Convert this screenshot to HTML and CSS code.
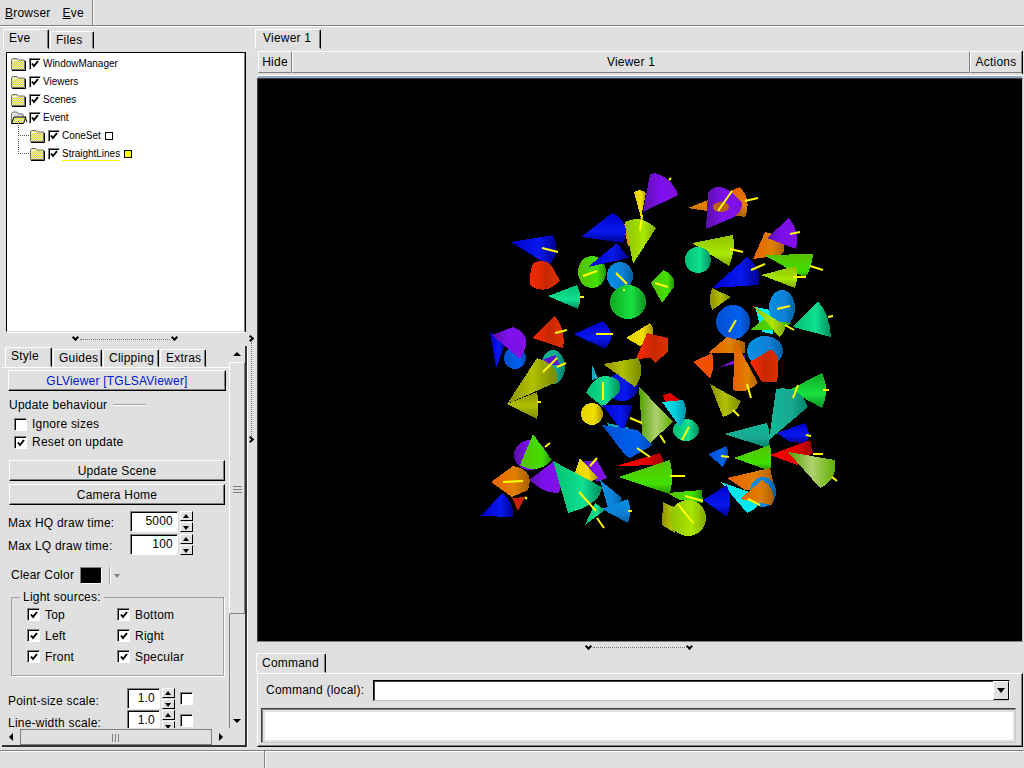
FILE: index.html
```html
<!DOCTYPE html>
<html lang="en">
<head>
<meta charset="utf-8">
<title>Eve</title>
<link rel="stylesheet" href="styles.css">
</head>
<body>
<svg class="defs" width="0" height="0" aria-hidden="true">
  <defs>
    <pattern id="dith" width="2" height="2" patternUnits="userSpaceOnUse"><rect width="2" height="2" fill="#ffff50"/><rect width="1" height="1" fill="#c8c8a8"/><rect x="1" y="1" width="1" height="1" fill="#c8c8a8"/></pattern>
    <symbol id="folder" viewBox="0 0 16 14">
      <path d="M1.5 12.5V2.5L3 1.500H7L8.500 3H14.500V12.500Z" fill="url(#dith)" stroke="#707070"/>
      <path d="M2 13.500H15.500V4" fill="none" stroke="#000"/>
      <path d="M2 3.500H7" stroke="#fff"/>
    </symbol>
    <symbol id="folderopen" viewBox="0 0 18 14">
      <path d="M1.500 12.500V2.500L3 1H7L8.500 3H13V6" fill="#e0e0e0" stroke="#707070"/>
      <path d="M1.500 12.500L4 6H16L13.500 12.500Z" fill="url(#dith)" stroke="#000"/>
      <path d="M15 6L17 11" stroke="#000"/>
    </symbol>
    <symbol id="tick" viewBox="0 0 10 10">
      <path d="M2 4.500L4 7L8 2" fill="none" stroke="#000" stroke-width="2"/>
    </symbol>
    <linearGradient id="b"><stop offset="0" stop-color="#0000c8"/><stop offset=".6" stop-color="#0818f0"/><stop offset="1" stop-color="#000090"/></linearGradient>
    <linearGradient id="b2"><stop offset="0" stop-color="#0050d0"/><stop offset=".7" stop-color="#0060f0"/><stop offset="1" stop-color="#0048a8"/></linearGradient>
    <linearGradient id="p"><stop offset="0" stop-color="#5a10a8"/><stop offset=".5" stop-color="#7e10f0"/><stop offset="1" stop-color="#8010e0"/></linearGradient>
    <linearGradient id="r"><stop offset="0" stop-color="#ff2800"/><stop offset=".55" stop-color="#c82800"/><stop offset="1" stop-color="#e03000"/></linearGradient>
    <linearGradient id="rr"><stop offset="0" stop-color="#ff0000"/><stop offset=".6" stop-color="#e80000"/><stop offset="1" stop-color="#a00000"/></linearGradient>
    <linearGradient id="o"><stop offset="0" stop-color="#e86000"/><stop offset=".6" stop-color="#e08000"/><stop offset="1" stop-color="#a86000"/></linearGradient>
    <linearGradient id="y"><stop offset="0" stop-color="#e8d000"/><stop offset=".6" stop-color="#f0e000"/><stop offset="1" stop-color="#a89000"/></linearGradient>
    <linearGradient id="l"><stop offset="0" stop-color="#90c000"/><stop offset=".6" stop-color="#a8e800"/><stop offset="1" stop-color="#80a800"/></linearGradient>
    <linearGradient id="ol"><stop offset="0" stop-color="#909000"/><stop offset=".5" stop-color="#b0c000"/><stop offset="1" stop-color="#788800"/></linearGradient>
    <linearGradient id="g"><stop offset="0" stop-color="#58c000"/><stop offset=".7" stop-color="#40e000"/><stop offset="1" stop-color="#289000"/></linearGradient>
    <linearGradient id="g2"><stop offset="0" stop-color="#10a820"/><stop offset=".6" stop-color="#18e040"/><stop offset="1" stop-color="#109020"/></linearGradient>
    <linearGradient id="tg"><stop offset="0" stop-color="#00c070"/><stop offset=".6" stop-color="#10e090"/><stop offset="1" stop-color="#008860"/></linearGradient>
    <linearGradient id="t"><stop offset="0" stop-color="#10b898"/><stop offset=".6" stop-color="#18a890"/><stop offset="1" stop-color="#008068"/></linearGradient>
    <linearGradient id="c"><stop offset="0" stop-color="#00f0f0"/><stop offset=".6" stop-color="#00c8d8"/><stop offset="1" stop-color="#0090a8"/></linearGradient>
    <linearGradient id="s"><stop offset="0" stop-color="#0090e0"/><stop offset=".6" stop-color="#1080d8"/><stop offset="1" stop-color="#0060a0"/></linearGradient>
    <linearGradient id="w"><stop offset="0" stop-color="#50a000"/><stop offset=".5" stop-color="#b0d070"/><stop offset="1" stop-color="#60b000"/></linearGradient>
    <linearGradient id="bv" href="#b" gradientTransform="rotate(90 .5 .5)"/>
    <linearGradient id="pv" href="#p" gradientTransform="rotate(90 .5 .5)"/>
    <linearGradient id="rv" href="#r" gradientTransform="rotate(90 .5 .5)"/>
    <linearGradient id="ov" href="#o" gradientTransform="rotate(90 .5 .5)"/>
    <linearGradient id="lv" href="#l" gradientTransform="rotate(90 .5 .5)"/>
    <linearGradient id="olv" href="#ol" gradientTransform="rotate(90 .5 .5)"/>
    <linearGradient id="gv" href="#g" gradientTransform="rotate(90 .5 .5)"/>
    <linearGradient id="g2v" href="#g2" gradientTransform="rotate(90 .5 .5)"/>
    <linearGradient id="tgv" href="#tg" gradientTransform="rotate(90 .5 .5)"/>
    <linearGradient id="tv" href="#t" gradientTransform="rotate(90 .5 .5)"/>
    <linearGradient id="sv" href="#s" gradientTransform="rotate(90 .5 .5)"/>
    <linearGradient id="wv" href="#w" gradientTransform="rotate(90 .5 .5)"/>
  </defs>
</svg>
<div class="app">
  <div class="menubar">
    <div class="menus"><span class="menu"><u>B</u>rowser</span><span class="menu"><u>E</u>ve</span></div>
  </div>
  <div class="main">
    <div class="left">
      <div class="tabs t-top">
        <span class="tab on w-eve">Eve</span><span class="tab w-files">Files</span>
      </div>
      <div class="treebox">
        <div class="tree-row"><svg class="fold"><use href="#folder"/></svg><span class="ck"><svg><use href="#tick"/></svg></span><span class="tree-label">WindowManager</span></div>
        <div class="tree-row"><svg class="fold"><use href="#folder"/></svg><span class="ck"><svg><use href="#tick"/></svg></span><span class="tree-label">Viewers</span></div>
        <div class="tree-row"><svg class="fold"><use href="#folder"/></svg><span class="ck"><svg><use href="#tick"/></svg></span><span class="tree-label">Scenes</span></div>
        <div class="tree-row"><svg class="fold"><use href="#folderopen"/></svg><span class="ck"><svg><use href="#tick"/></svg></span><span class="tree-label">Event</span></div>
        <div class="tree-row sub"><svg class="fold"><use href="#folder"/></svg><span class="ck"><svg><use href="#tick"/></svg></span><span class="tree-label">ConeSet</span><span class="swatch"></span></div>
        <div class="tree-row sub"><svg class="fold"><use href="#folder"/></svg><span class="ck"><svg><use href="#tick"/></svg></span><span class="tree-label sel">StraightLines</span><span class="swatch yel"></span></div>
      </div>
      <div class="hsplit hs-left"><span class="chev"></span><span class="dots"></span><span class="chev"></span></div>
      <div class="editor">
        <div class="tabs t-low">
          <span class="tab on w-style">Style</span><span class="tab w-guides">Guides</span><span class="tab w-clip">Clipping</span><span class="tab w-extras">Extras</span>
        </div>
        <div class="pane">
          <button class="btn b-gl">GLViewer [TGLSAViewer]</button>
          <div class="sect"><span>Update behaviour</span><i class="rule"></i></div>
          <label class="chk c1"><span class="cb"></span>Ignore sizes</label>
          <label class="chk c2"><span class="cb"><svg><use href="#tick"/></svg></span>Reset on update</label>
          <button class="btn b-us">Update Scene</button>
          <button class="btn b-ch">Camera Home</button>
          <div class="num n-hq"><span class="nl">Max HQ draw time:</span><span class="inp w48">5000</span><span class="spin"><b class="up"></b><b class="dn"></b></span></div>
          <div class="num n-lq"><span class="nl">Max LQ draw time:</span><span class="inp w48">100</span><span class="spin"><b class="up"></b><b class="dn"></b></span></div>
          <div class="clear"><span>Clear Color</span><span class="blk"></span><i class="vsep"></i><i class="caret"></i></div>
          <fieldset class="lights">
            <legend>Light sources:</legend>
            <div class="lgrid">
              <label class="lc"><span class="cb"><svg><use href="#tick"/></svg></span>Top</label>
              <label class="lc"><span class="cb"><svg><use href="#tick"/></svg></span>Bottom</label>
              <label class="lc"><span class="cb"><svg><use href="#tick"/></svg></span>Left</label>
              <label class="lc"><span class="cb"><svg><use href="#tick"/></svg></span>Right</label>
              <label class="lc"><span class="cb"><svg><use href="#tick"/></svg></span>Front</label>
              <label class="lc"><span class="cb"><svg><use href="#tick"/></svg></span>Specular</label>
            </div>
          </fieldset>
          <div class="num n-ps"><span class="nl nl2">Point-size scale:</span><span class="inp w33">1.0</span><span class="spin"><b class="up"></b><b class="dn"></b></span><span class="cb cb-s"></span></div>
          <div class="num n-lw"><span class="nl nl2">Line-width scale:</span><span class="inp w33">1.0</span><span class="spin"><b class="up"></b><b class="dn"></b></span><span class="cb cb-s"></span></div>
        </div>
        <div class="vscroll">
          <i class="arr a-up"></i>
          <div class="vtrack"><div class="vthumb"><i class="grip"></i></div></div>
          <i class="arr a-dn"></i>
        </div>
        <div class="hscroll">
          <i class="arr a-lt"></i>
          <div class="hthumb"><i class="hgrip"></i></div>
          <i class="arr a-rt"></i>
        </div>
      </div>
    </div>
    <div class="vsplit"><span class="chev-r"></span><span class="vdots"></span><span class="chev-r"></span></div>
    <div class="right">
      <div class="tabs t-view"><span class="tab on w-view">Viewer 1</span></div>
      <div class="viewer-head">
        <span class="vh vh-hide">Hide</span><span class="vh vh-title">Viewer 1</span><span class="vh vh-act">Actions</span>
      </div>
      <div class="bluebar"></div>
      <div class="gl">
<svg class="scene" viewBox="258 79 764 562" shape-rendering="crispEdges">
<g>
<path d="M688 208L740 187Q752 200 745 217Z" fill="url(#ov)"/>
<path d="M623 224L630 222L632 245L628 246Z" fill="#f09000"/>
<path d="M641 218L634 192Q640 188 646 193Z" fill="url(#y)"/>
<ellipse cx="592" cy="272" rx="14" ry="16" fill="url(#g)"/>
<path d="M581 237L612 213Q632 222 623 243Z" fill="url(#bv)"/>
<path d="M511 242L553 235Q562 255 548 265Z" fill="url(#b)"/>
<path d="M533 263Q545 258 552 266Q556 274 560 281Q545 296 530 285Q529 275 533 263Z" fill="url(#r)"/>
<path d="M548 296L577 285Q583 297 578 309Z" fill="url(#tgv)"/>
<ellipse cx="620" cy="276" rx="13" ry="14" fill="url(#s)"/>
<path d="M588 267L617 243L629 258Z" fill="url(#b)"/>
<path d="M633 264L625 222Q640 214 656 228Z" fill="url(#l)"/>
<path d="M643 212L650 174L655 173Q672 178 678 195Z" fill="url(#p)"/>
<ellipse cx="628" cy="302" rx="18" ry="17" fill="url(#g2)"/>
<path d="M692 243L733 235Q736 250 729 266Z" fill="url(#lv)"/>
<ellipse cx="698" cy="260" rx="13" ry="13" fill="url(#tg)"/>
<path d="M706 229L708 192Q722 178 742 203Q742 214 732 218Z" fill="url(#p)"/>
<ellipse cx="721" cy="207" rx="8" ry="5" fill="#b86010"/>
<path d="M651 283L663 270Q676 275 674 287L662 303Z" fill="url(#g)"/>
<path d="M753 259L765 232Q786 236 784 248Q785 256 775 256Z" fill="url(#o)"/>
<path d="M767 238L789 218Q800 232 796 249Z" fill="url(#p)"/>
<path d="M764 255L813 254Q812 268 805 278Z" fill="url(#gv)"/>
<path d="M712 288L747 257Q762 268 759 285Z" fill="url(#b)"/>
<path d="M761 275L796 266Q799 277 795 288Z" fill="url(#lv)"/>
<path d="M731 297L712 288Q708 300 712 310Z" fill="url(#ol)"/>
<circle cx="733" cy="322" r="17" fill="url(#b2)"/>
<path d="M755 307L775 311L773 334L762 332Z" fill="#00f0f0"/>
<ellipse cx="782" cy="308" rx="13" ry="18" fill="url(#s)"/>
<path d="M750 330L763 320L792 323L780 330Z" fill="url(#g)"/>
<path d="M753 306L785 325Q786 332 779 337Z" fill="url(#l)"/>
<path d="M793 327L818 301Q830 315 831 337Z" fill="url(#tg)"/>
<path d="M532 338L555 316Q566 330 563 348Z" fill="url(#r)"/>
<path d="M574 334L603 321Q618 335 605 349Z" fill="url(#bv)"/>
<circle cx="515" cy="358" r="11" fill="url(#b2)"/>
<path d="M490 332L505 345L496 368Z" fill="url(#b)"/>
<path d="M492 335L513 327Q535 335 520 359Z" fill="url(#p)"/>
<path d="M626 338L650 323Q660 335 640 346Z" fill="url(#y)"/>
<path d="M636 359L647 333L668 338V352L655 363L650 358Z" fill="url(#r)"/>
<ellipse cx="765" cy="351" rx="18" ry="15" fill="url(#s)"/>
<path d="M750 362L770 350Q782 352 777 382H762Z" fill="url(#r)"/>
<path d="M693 362L712 353Q716 366 710 378Z" fill="#f05000"/>
<path d="M708 353L727 337L745 342V353Z" fill="url(#o)"/>
<path d="M720 367L745 355L745 362Z" fill="#7010d0"/>
<path d="M735 340L758 383Q745 395 733 390Z" fill="url(#o)"/>
<path d="M789 390L822 373Q830 390 822 408Z" fill="url(#g2v)"/>
<path d="M710 384L741 401Q738 412 723 417Z" fill="url(#ol)"/>
<ellipse cx="553" cy="367" rx="12" ry="17" fill="url(#t)"/>
<path d="M532 364L555 355L560 365Z" fill="#6010d0"/>
<path d="M507 404L537 358Q560 365 557 382Z" fill="url(#ol)"/>
<path d="M507 404L537 392Q540 405 537 419Z" fill="url(#olv)"/>
<path d="M592 365L598 378L592 380Z" fill="#20a8c0"/>
<ellipse cx="622" cy="387" rx="16" ry="14" fill="url(#b)"/>
<path d="M603 364L638 358Q646 372 635 387Z" fill="url(#ol)"/>
<path d="M603 407L586 393Q598 368 618 380Q625 392 610 400Z" fill="url(#tg)"/>
<path d="M607 423L613 440L630 428Z" fill="#10a8b0"/>
<path d="M602 405L633 405L623 432Z" fill="url(#b)"/>
<circle cx="592" cy="414" r="11" fill="url(#y)"/>
<path d="M663 395L670 393L680 400L668 410Z" fill="#e00000"/>
<ellipse cx="686" cy="430" rx="13" ry="11" fill="url(#tg)"/>
<path d="M662 402L683 400Q690 412 680 427Z" fill="url(#c)"/>
<path d="M639 387L650 398L673 422L650 443L643 447Z" fill="url(#w)"/>
<path d="M602 425L637 430L653 445L630 458L625 455Z" fill="url(#b2)"/>
<path d="M777 433L805 423Q812 433 806 443L790 442Z" fill="url(#bv)"/>
<path d="M769 440L776 389Q800 385 808 407Z" fill="url(#t)"/>
<path d="M724 434L767 423Q772 435 768 448Z" fill="url(#tv)"/>
<path d="M708 454L727 446Q730 456 723 467Z" fill="url(#b2)"/>
<path d="M770 455L810 440L813 453L797 465Z" fill="url(#rr)"/>
<path d="M734 458L770 445Q773 458 770 471Z" fill="url(#gv)"/>
<path d="M788 452L835 460Q838 480 820 488Z" fill="url(#w)"/>
<path d="M616 466L660 453Q665 460 662 465Z" fill="url(#rr)"/>
<path d="M667 493L702 490L703 503L680 500Z" fill="url(#g)"/>
<path d="M618 477L670 460Q674 477 670 494Z" fill="url(#gv)"/>
<path d="M663 502L662 525L675 533L680 510Z" fill="url(#ol)"/>
<circle cx="688" cy="518" r="18" fill="url(#l)"/>
<path d="M727 478L770 468L775 490L745 490Z" fill="url(#o)"/>
<path d="M721 482L763 497Q760 508 747 513Z" fill="#00e8f0"/>
<path d="M703 500L727 485Q733 500 727 517Z" fill="url(#bv)"/>
<ellipse cx="763" cy="492" rx="13" ry="15" fill="url(#s)"/>
<path d="M740 499L762 480Q778 490 772 505Z" fill="url(#o)"/>
<ellipse cx="530" cy="455" rx="16" ry="15" fill="url(#p)"/>
<path d="M533 434L552 460Q538 475 520 465Z" fill="url(#g)"/>
<path d="M512 498L525 497L518 511Z" fill="#c82000"/>
<path d="M481 516L502 493Q515 503 513 517Z" fill="url(#b)"/>
<path d="M491 482L513 466Q535 470 528 490L512 497Z" fill="url(#o)"/>
<path d="M529 480L553 462Q565 478 559 493Q545 494 529 480Z" fill="url(#p)"/>
<path d="M580 462L597 460L607 478L597 482Z" fill="url(#p)"/>
<path d="M573 478L580 458L598 478L590 482Z" fill="url(#y)"/>
<path d="M600 480L622 498Q618 508 608 508Z" fill="url(#s)"/>
<path d="M585 525L595 503L605 510Z" fill="url(#tg)"/>
<path d="M553 461L602 487Q600 505 568 513Z" fill="url(#tg)"/>
<path d="M602 509L628 499Q632 511 628 523Z" fill="url(#sv)"/>
</g>
<g class="ln" shape-rendering="auto">
<path d="M542 248L558 252M580 297H584M583 276L597 271M616 273L627 284M640 231L642 215M669 180L671 178M623 290H625M555 333L567 330M596 334H613"/>
<path d="M718 211L732 191M745 201L758 198M730 249L743 252M655 283L668 287M790 234L800 232M810 266L823 270M793 277H806M751 270L765 264M729 332L736 320M777 309L790 306M785 325L794 330M828 317L833 316"/>
<path d="M747 384L751 398M823 390H829M798 385L793 398M733 410L739 416M682 440L689 427M660 435L665 443M721 456L729 457M813 454H823M832 477L837 481M670 476H685M685 496L703 501M678 504L693 523M806 435L811 436M748 499L760 505"/>
<path d="M543 372L557 358M557 367L566 363M537 402H541M603 382V400M637 448L650 457M630 418L642 423M545 447L550 443M503 482L523 481M525 497L527 499M590 466L597 458M579 492L596 511M597 518L604 528M628 511H632"/>
</g>
</svg>
      </div>
      <div class="hsplit hs-right"><span class="chev"></span><span class="dots"></span><span class="chev"></span></div>
      <div class="tabs t-cmd"><span class="tab on w-cmd">Command</span></div>
      <div class="cmd">
        <div class="cmd-row">
          <span class="cmd-label">Command (local):</span>
          <div class="combo"><span class="combo-btn"><i class="caret-b"></i></span></div>
        </div>
        <div class="output"></div>
      </div>
    </div>
  </div>
  <div class="status"><span class="st1"></span><span class="st2"></span></div>
</div>
</body>
</html>
```
FILE: styles.css
```css
* { box-sizing: border-box; }
html, body { margin: 0; padding: 0; height: 100%; overflow: hidden; }
body { background: #e0e0e0; font: 12px/14px "Liberation Sans", Arial, sans-serif; color: #000; letter-spacing: .22px; }
.defs { position: absolute; }
.app { width: 1024px; height: 768px; display: flex; flex-direction: column; }

.menubar { height: 26px; border-bottom: 1px solid #808080; box-shadow: 0 1px #fff; flex: none; }
.menus { width: 93px; height: 25px; border-right: 1px solid #808080; box-shadow: 1px 0 #fff; padding: 6px 0 0 5px; display: flex; gap: 12px; }

.main { flex: 1; display: flex; min-height: 0; }
.left { width: 248px; height: 722px; flex: none; display: flex; flex-direction: column; padding-left: 3px; }

.tabs { display: flex; align-items: flex-end; flex: none; }
.tab { height: 18px; border: 1px solid; border-color: #fff #000 transparent #fff; border-radius: 2px 2px 0 0; box-shadow: inset -1px 0 #808080; padding: 1px 0 0 5px; white-space: nowrap; }
.tab.on { height: 20px; padding-top: 1px; }
.t-top { height: 23px; }
.w-eve { width: 46px; }
.w-files { width: 44px; margin-left: 1px; }
.t-low { height: 21px; padding-left: 3px; }
.w-style { width: 47px; }
.w-guides { width: 49px; margin-left: 1px; }
.w-clip { width: 56px; margin-left: 1px; }
.w-extras { width: 46px; margin-left: 1px; }
.t-view { height: 23px; }
.w-view { width: 66px; padding-left: 7px; }
.t-cmd { height: 20px; padding-left: 1px; }
.tab.w-cmd { width: 70px; padding-top: 2px; }

.treebox { margin: 3px 3px 0 3px; height: 280px; background: #fff; border: 1px solid; border-color: #000 #808080 #e0e0e0 #000; box-shadow: 1px 0 #000, 1px 1px #fff; padding-top: 2px; flex: none; font-size: 10px; letter-spacing: 0; }
.tree-row { height: 18px; display: flex; align-items: center; padding-left: 3px; position: relative; }
.tree-row.sub { padding-left: 22px; }
.tree-row.sub::before { content: ""; position: absolute; left: 11px; top: -6px; width: 10px; height: 14px; border-left: 1px dotted #555; border-bottom: 1px dotted #555; }
.fold { width: 16px; height: 14px; flex: none; }
.tree-row:nth-child(4) .fold { width: 18px; margin-right: -2px; }
.ck { width: 12px; height: 12px; margin-left: 3px; border: 1px solid; border-color: #808080 #fff #fff #808080; background: #fff; box-shadow: inset 1px 1px #000; flex: none; display: block; }
.ck svg, .cb svg { display: block; width: 10px; height: 10px; }
.tree-label { margin-left: 2px; white-space: nowrap; letter-spacing: -.02px; }
.tree-label.sel { border-bottom: 1px solid #ffff00; height: 14px; }
.swatch { width: 8px; height: 8px; border: 1px solid #000; margin-left: 4px; background: #fff; }
.swatch.yel { background: #ffff00; }

.hsplit { display: flex; align-items: center; justify-content: center; flex: none; }
.chev { border-left: 2px solid #000; border-bottom: 2px solid #000; width: 5px; height: 5px; transform: rotate(-45deg); margin-top: -3px; }
.dots { width: 88px; border-top: 1px dotted #777; margin: 0 2px; }
.hs-left { height: 14px; padding-right: 2px; }
.hs-left .dots { width: 90px; }
.hs-right { height: 11px; padding-right: 2px; }
.hs-right .dots { width: 92px; }

.editor { position: relative; height: 401px; width: 245px; margin-left: -1px; flex: none; border-right: 2px solid #333; border-bottom: 2px solid #333; box-shadow: 1px 0 #fff; }
.pane { height: 361px; width: 227px; overflow: hidden; border-top: 1px solid #fff; box-shadow: 1px 0 #808080; padding: 2px 0 0 6px; position: relative; }

.btn { display: block; font: inherit; letter-spacing: inherit; background: #e0e0e0; border: 1px solid; border-color: #fff #000 #000 #fff; box-shadow: inset -1px -1px #808080; padding: 0; height: 21px; color: #000; }
.b-gl { width: 218px; color: #0018c8; }
.b-us { width: 216px; margin: 9px 0 0 1px; }
.b-ch { width: 216px; margin: 3px 0 0 1px; }

.sect { display: flex; align-items: center; margin: 7px 0 0 1px; height: 14px; }
.rule { width: 33px; height: 2px; background: #a0a0a0; border-bottom: 1px solid #fff; margin-left: 6px; }
.chk { display: flex; align-items: center; height: 18px; margin-left: 6px; }
.c1 { margin-top: 3px; }
.cb { width: 13px; height: 13px; border: 1px solid; border-color: #808080 #fff #fff #808080; background: #fff; box-shadow: inset 1px 1px #000; display: block; flex: none; margin-right: 5px; padding: 1px 0 0 1px; }

.num { display: flex; align-items: center; height: 21px; }
.nl { width: 122px; padding-top: 3px; white-space: nowrap; }
.nl2 { width: 119px; padding-top: 5px; }
.n-hq { margin-top: 6px; }
.n-lq { margin-top: 2px; }
.inp { height: 21px; background: #fff; border: 1px solid; border-color: #808080 #fff #fff #808080; box-shadow: inset 1px 1px #000; text-align: right; padding: 2px 4px 0 0; display: block; }
.w48 { width: 48px; }
.w33 { width: 33px; }
.spin { width: 13px; height: 21px; margin-left: 2px; display: flex; flex-direction: column; gap: 1px; flex: none; }
.spin b { flex: 1; border: 1px solid; border-color: #fff #000 #000 #fff; position: relative; display: block; }
.spin b::after { content: ""; position: absolute; left: 2px; width: 0; height: 0; border: 3.5px solid transparent; }
.spin .up::after { top: -1px; border-bottom: 4px solid #000; }
.spin .dn::after { top: 3px; border-top: 4px solid #000; }

.clear { display: flex; align-items: center; height: 18px; margin: 11px 0 0 3px; }
.blk { width: 22px; height: 17px; background: #000; border: 1px solid; border-color: #808080 #fff #fff #808080; margin-left: 6px; }
.vsep { width: 2px; height: 17px; background: #a0a0a0; border-right: 1px solid #fff; margin-left: 7px; }
.caret { width: 0; height: 0; border: 3px solid transparent; border-top: 4px solid #808080; margin: 4px 0 0 3px; }

.lights { margin: 6px 0 0 3px; padding: 0; width: 213px; height: 86px; border: 1px solid #a0a0a0; box-shadow: 1px 1px #fff; position: relative; }
.lights legend { padding: 0 3px; margin-left: 8px; line-height: 14px; }
.lgrid { display: grid; grid-template-columns: 90px 90px; grid-auto-rows: 21px; padding: 0 0 0 15px; }
.lc { display: flex; align-items: center; }

.n-ps { margin-top: 12px; }
.n-lw { margin-top: 1px; }
.cb-s { margin-left: 5px; margin-right: 0; }

.vscroll { position: absolute; left: 227px; top: 6px; width: 16px; height: 378px; }
.vtrack { position: absolute; top: 10px; left: 0; width: 16px; height: 356px; }
.vthumb { height: 252px; border: 1px solid; border-color: #fff #808080 #808080 #fff; position: relative; }
.grip { position: absolute; left: 3px; top: 123px; width: 9px; height: 7px; border-top: 1px solid #808080; border-bottom: 1px solid #808080; }
.grip::after { content: ""; position: absolute; left: 0; right: 0; top: 2px; height: 1px; background: #808080; }
.arr { position: absolute; width: 0; height: 0; border: 4px solid transparent; }
.a-up { top: -4px; left: 4px; border-bottom: 4px solid #000; }
.a-dn { bottom: 3px; left: 4px; border-top: 4px solid #000; }
.hscroll { position: absolute; left: 0; top: 382px; width: 224px; height: 17px; }
.hthumb { position: absolute; left: 18px; top: 1px; width: 192px; height: 16px; border: 1px solid #808080; }
.hgrip { position: absolute; left: 91px; top: 4px; width: 7px; height: 8px; border-left: 1px solid #808080; border-right: 1px solid #808080; }
.hgrip::after { content: ""; position: absolute; left: 2px; top: 0; bottom: 0; width: 1px; background: #808080; }
.a-lt { left: 3px; top: 5px; border-right: 4px solid #000; }
.a-rt { left: 217px; top: 5px; border-left: 4px solid #000; }

.vsplit { width: 7px; height: 722px; flex: none; display: flex; flex-direction: column; align-items: center; padding-top: 310px; }
.chev-r { width: 5px; height: 5px; border-right: 2px solid #000; border-top: 2px solid #000; transform: rotate(45deg); flex: none; margin-left: -2px; }
.vdots { height: 94px; border-left: 1px dotted #777; margin: 1px 0; flex: none; }

.right { width: 769px; height: 722px; flex: none; display: flex; flex-direction: column; }
.viewer-head { display: flex; height: 23px; margin: 2px 0 0 3px; flex: none; width: 765px; border-right: 1px solid #000; }
.vh { border: 1px solid; border-color: #fff #808080 #808080 #fff; text-align: center; height: 22px; padding-top: 3px; white-space: nowrap; }
.vh-hide { width: 34px; }
.vh-title { flex: 1; }
.vh-act { width: 52px; }
.bluebar { height: 3px; margin: 1px 0 0 3px; width: 764px; background: #90a8c0; border-top: 1px solid #fff; flex: none; }
.gl { height: 564px; margin: 0 0 0 2px; width: 766px; border: 1px solid; border-color: #404040 #c0c0c0 #808080 #404040; background: #000; flex: none; }
.scene { display: block; width: 764px; height: 562px; }

.cmd { height: 74px; margin-left: 2px; width: 766px; border: 1px solid; border-color: #fff #000 #000 #fff; box-shadow: inset -1px -1px #808080; flex: none; }
.cmd-row { display: flex; align-items: center; height: 21px; margin-top: 6px; }
.cmd-label { margin-left: 8px; margin-top: -2px; width: 107px; white-space: nowrap; }
.combo { width: 637px; height: 21px; background: #fff; border: 1px solid; border-color: #000 #fff #c0c0c0 #000; box-shadow: inset 1px 1px #404040; position: relative; }
.combo-btn { position: absolute; right: 0; top: 0; width: 16px; height: 19px; background: #e0e0e0; border: 1px solid; border-color: #fff #000 #000 #fff; }
.caret-b { position: absolute; left: 3px; top: 6px; width: 0; height: 0; border: 4px solid transparent; border-top: 5px solid #000; }
.output { margin: 7px 0 0 3px; width: 755px; height: 35px; background: #fff; border: 1px solid; border-color: #404040 #c8c8c8 #c8c8c8 #404040; box-shadow: inset 1px 1px #808080, inset 0 3px #e0e0e0, inset 3px 0 #e0e0e0, inset -2px -2px #e0e0e0; }

.status { height: 18px; display: flex; flex: none; }
.st1 { width: 264px; border-top: 1px solid #808080; box-shadow: inset 0 1px #fff; }
.st2 { flex: 1; border-top: 1px solid #808080; border-left: 1px solid #808080; box-shadow: inset 1px 1px #fff; }

.ln { stroke: #ffff00; stroke-width: 2; fill: none; }
```
